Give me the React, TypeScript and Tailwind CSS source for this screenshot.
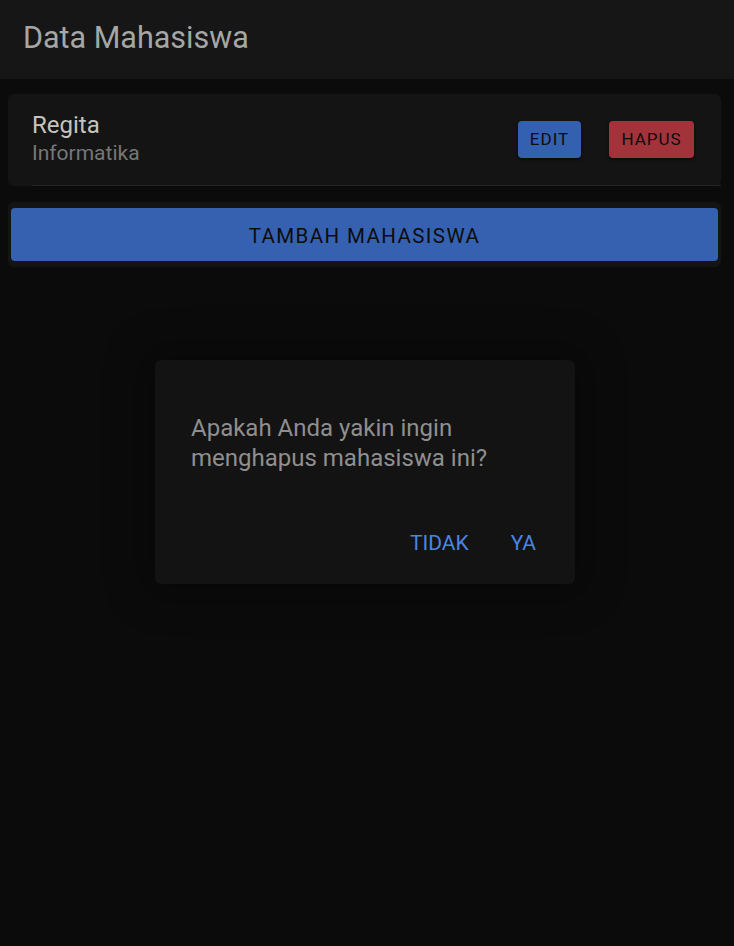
export default function App() {
  return (
    <div className="relative min-h-[946px] w-full bg-[#0b0b0b] font-['Roboto',sans-serif]">
      <header className="flex h-[79px] items-center bg-[#161616] px-[23px] pb-[2px]">
        <h1 className="text-[30.5px] leading-none text-[#a6a6a6]">Data Mahasiswa</h1>
      </header>

      <div className="pl-[8px] pr-[13px] pt-[15px]">
        <div className="rounded-[6px] bg-[#141414]">
          <div className="ml-[24px] flex h-[92px] items-center border-b border-[#262626] pr-[27px]">
            <div className="flex flex-1 flex-col pb-[2px]">
              <span className="text-[24px] leading-[28px] text-[#c6c3be]">Regita</span>
              <span className="text-[21px] leading-[28px] text-[#777777]">Informatika</span>
            </div>
            <button className="h-[37px] w-[63px] rounded-[4px] bg-[#3460b0] text-[17px] tracking-[1px] text-[#0c0c0c] shadow-[0_2px_3px_rgba(0,0,0,0.5)]">
              EDIT
            </button>
            <button className="ml-[28px] h-[37px] w-[85px] rounded-[4px] bg-[#a3333b] text-[17px] tracking-[1px] text-[#0c0c0c] shadow-[0_2px_3px_rgba(0,0,0,0.5)]">
              HAPUS
            </button>
          </div>
        </div>

        <div className="mt-[16px] rounded-[6px] bg-[#141414] px-[3px] py-[6px]">
          <button className="h-[53px] w-full rounded-[4px] bg-[#3561b0] pt-[3px] text-[20.5px] tracking-[1.4px] text-[#0d0d0d]">
            TAMBAH MAHASISWA
          </button>
        </div>
      </div>

      <div className="absolute left-[155px] top-[360px] h-[224px] w-[420px] rounded-[6px] bg-[#131313] px-[36px] pt-[53px] shadow-[0_0_40px_12px_rgba(0,0,0,0.3)]">
        <p className="text-[24px] leading-[30px] text-[#8f8f8f]">
          Apakah Anda yakin ingin menghapus mahasiswa ini?
        </p>
        <div className="mt-[56px] flex justify-end gap-[42px] pr-[3px]">
          <button className="text-[21px] leading-[28px] text-[#4a84e4]">TIDAK</button>
          <button className="text-[21px] leading-[28px] text-[#4a84e4]">YA</button>
        </div>
      </div>
    </div>
  );
}
